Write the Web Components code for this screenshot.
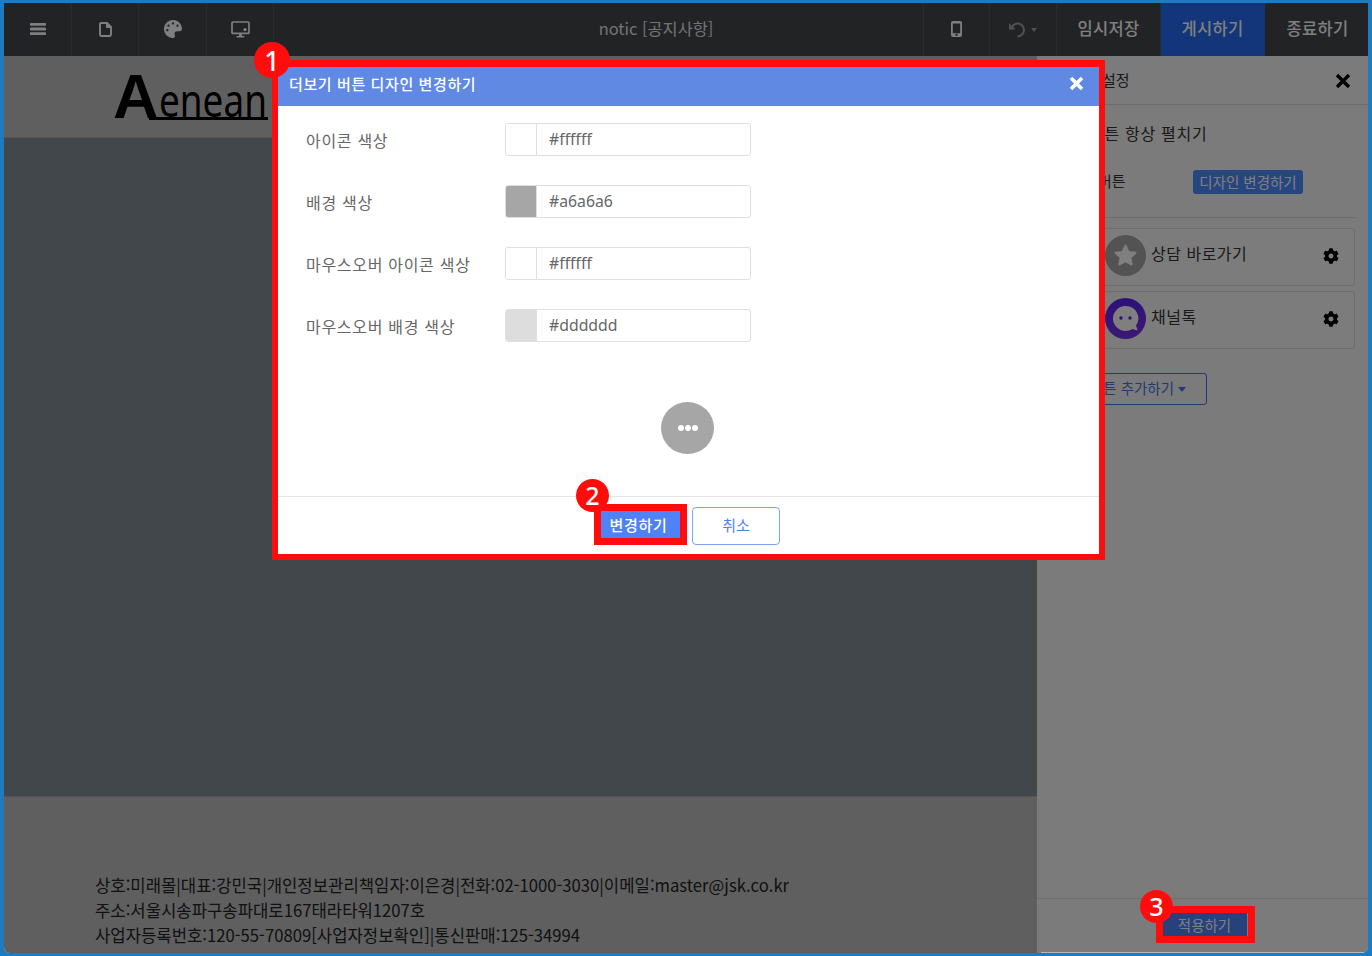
<!DOCTYPE html>
<html lang="ko">
<head>
<meta charset="utf-8">
<title>notic</title>
<style>
html,body{margin:0;height:100%;}
body{
    width:1372px;height:956px;overflow:hidden;background:#1f7bc0;
    font-family:"Noto Sans CJK KR","Noto Sans",sans-serif;
}
</style>
</head>
<body>
<app-frame>
    <top-bar slot="top" page-title="notic [공지사항]"></top-bar>
    <page-canvas slot="canvas"></page-canvas>
    <side-panel slot="panel"></side-panel>
    <design-modal slot="modal"></design-modal>
    <red-ring slot="notes" style="left:1156px;top:906px;width:85px;height:23px"></red-ring>
    <call-out slot="notes" n="1" style="left:254px;top:42px"></call-out>
    <call-out slot="notes" n="3" style="left:1140px;top:890px;width:33px;height:33px;font-size:25px"></call-out>
</app-frame>

<script>
function sheet(css, html){
    return `<style>${css}</style>${html}`;
}

const COG = `<svg viewBox="0 0 512 512" width="16" height="16"><path fill="#000" d="M487.4 315.7l-42.6-24.6c4.3-23.2 4.3-47 0-70.2l42.6-24.6c4.9-2.8 7.1-8.6 5.5-14-11.1-35.6-30-67.8-54.7-94.6-3.8-4.1-10-5.1-14.8-2.3L380.8 110c-17.9-15.4-38.5-27.3-60.8-35.1V25.8c0-5.6-3.9-10.5-9.4-11.7-36.7-8.2-74.3-7.8-109.2 0-5.5 1.2-9.4 6.1-9.4 11.7V75c-22.2 7.9-42.8 19.8-60.8 35.1L88.7 85.5c-4.9-2.8-11-1.9-14.8 2.3-24.7 26.7-43.6 58.9-54.7 94.6-1.7 5.4.6 11.2 5.5 14L67.3 221c-4.3 23.2-4.3 47 0 70.2l-42.6 24.6c-4.9 2.8-7.1 8.6-5.5 14 11.1 35.6 30 67.8 54.7 94.6 3.8 4.1 10 5.1 14.8 2.3l42.6-24.6c17.9 15.4 38.5 27.3 60.8 35.1v49.2c0 5.6 3.9 10.5 9.4 11.7 36.7 8.2 74.3 7.8 109.2 0 5.5-1.2 9.4-6.1 9.4-11.7v-49.2c22.2-7.9 42.8-19.8 60.8-35.1l42.6 24.6c4.9 2.8 11 1.9 14.8-2.3 24.7-26.7 43.6-58.9 54.7-94.6 1.5-5.5-.7-11.3-5.6-14.1zM256 336c-44.1 0-80-35.9-80-80s35.9-80 80-80 80 35.9 80 80-35.9 80-80 80z"/></svg>`;

class AppFrame extends HTMLElement{
    constructor(){
        super();
        this.attachShadow({mode:'open'});
        this.shadowRoot.innerHTML = sheet(`
            :host{display:block;position:relative;width:1372px;height:956px;box-sizing:border-box;padding:3px 4px 3px 4px;}
            .app{display:grid;grid-template-rows:53px 1fr;height:100%;border-radius:0 0 6px 6px;overflow:hidden;}
            .work{display:grid;grid-template-columns:1033px 1fr;min-height:0;}
            .dim{position:absolute;left:4px;top:3px;right:4px;bottom:3px;background:rgba(0,0,0,.5);border-radius:0 0 6px 6px;}
            .edge{position:absolute;left:1041px;right:8px;bottom:3px;height:1px;background:#b5b5b5;}
            .modal{position:absolute;left:272px;top:60px;}
        `,`
            <div class="app">
                <slot name="top"></slot>
                <div class="work">
                    <slot name="canvas"></slot>
                    <slot name="panel"></slot>
                </div>
            </div>
            <div class="dim"></div>
            <div class="edge"></div>
            <div class="modal"><slot name="modal"></slot></div>
            <slot name="notes"></slot>
        `);
    }
}
customElements.define('app-frame', AppFrame);

class TopBar extends HTMLElement{
    constructor(){
        super();
        this.attachShadow({mode:'open'});
        this.shadowRoot.innerHTML = sheet(`
            :host{display:flex;background:#43464b;color:#fff;height:53px;}
            .cell{display:flex;align-items:center;justify-content:center;width:67px;border-right:1px solid #55585d;flex:none;padding-bottom:1px;box-sizing:content-box;height:52px;}
            .cell.n{width:66px;}
            .cell.p{width:65px;}
            .cell svg{display:block;}
            .title{flex:1;text-align:center;font-size:16.4px;line-height:50px;color:#e6e6e6;padding-left:115px;}
            .txt{display:flex;align-items:center;justify-content:center;flex:none;font-size:16.5px;letter-spacing:.3px;color:#fff;width:104px;border-right:1px solid #55585d;box-sizing:border-box;font-weight:500;padding-bottom:4px;}
            .txt.pri{background:#266af4;border-color:#266af4;}
            .txt.last{border:0;width:103px;padding-left:2px;}
            .left{border-left:1px solid #55585d;}
            .undo{gap:4px;}
            .undo>*{opacity:.5;}
            .caret{width:0;height:0;border:3.5px solid transparent;border-top:4px solid #fff;margin-top:4px;}
        `,`
            <div class="cell"><svg width="16" height="14" viewBox="0 0 16 14"><path fill="#fff" d="M1 1h14a1 1 0 0 1 0 2.8H1A1 1 0 0 1 1 1zM1 5.6h14a1 1 0 0 1 0 2.8H1a1 1 0 0 1 0-2.8zM1 10.2h14a1 1 0 0 1 0 2.8H1a1 1 0 0 1 0-2.8z"/></svg></div>
            <div class="cell n"><svg width="13" height="15" viewBox="0 0 13 15"><path fill="none" stroke="#fff" stroke-width="1.9" d="M2 1h6l4 4v7.6a1.4 1.4 0 0 1-1.4 1.4H2.4A1.4 1.4 0 0 1 1 12.6V2a1 1 0 0 1 1-1zM8 1v4h4"/></svg></div>
            <div class="cell"><svg width="18" height="18" viewBox="0 0 512 512"><path fill="#fff" d="M204.3 5C104.9 24.4 24.8 104.3 5.2 203.4c-37 187 131.7 326.4 258.8 306.7 41.2-6.4 61.4-54.6 42.5-91.7-23.1-45.4 9.9-98.4 60.9-98.4h79.7c35.8 0 64.8-29.6 64.9-65.3C511.5 97.1 368.1-26.9 204.3 5zM96 320c-17.7 0-32-14.3-32-32s14.3-32 32-32 32 14.3 32 32-14.3 32-32 32zm32-128c-17.7 0-32-14.3-32-32s14.3-32 32-32 32 14.3 32 32-14.3 32-32 32zm128-64c-17.7 0-32-14.3-32-32s14.3-32 32-32 32 14.3 32 32-14.3 32-32 32zm128 64c-17.7 0-32-14.3-32-32s14.3-32 32-32 32 14.3 32 32-14.3 32-32 32z"/></svg></div>
            <div class="cell n"><svg width="19" height="17" viewBox="0 0 19 17"><path fill="none" stroke="#fff" stroke-width="1.7" d="M2 1h15a1 1 0 0 1 1 1v9.4a1 1 0 0 1-1 1H2a1 1 0 0 1-1-1V2a1 1 0 0 1 1-1z"/><path fill="#fff" d="M8 12.4h3V15h2.4v1.4H5.6V15H8z"/><circle cx="14" cy="8.6" r="1.6" fill="#fff"/></svg></div>
            <div class="title">${this.getAttribute('page-title')}</div>
            <div class="cell p left"><svg width="11" height="16" viewBox="0 0 11 16"><path fill-rule="evenodd" fill="#fff" d="M2 0h7a2 2 0 0 1 2 2v12a2 2 0 0 1-2 2H2a2 2 0 0 1-2-2V2a2 2 0 0 1 2-2zM1.8 2.4v9.8h7.4V2.4zM5.5 12.8a1.1 1.1 0 1 0 0 2.2 1.1 1.1 0 0 0 0-2.2z"/></svg></div>
            <div class="cell n undo"><svg width="18" height="17" viewBox="0 0 18 17"><path fill="none" stroke="#fff" stroke-width="2" d="M2.2 8.4A6.4 6.4 0 1 1 8.4 15.4"/><path fill="#fff" d="M0 2v6.6h6.6z"/></svg><i class="caret"></i></div>
            <div class="txt">임시저장</div>
            <div class="txt pri">게시하기</div>
            <div class="txt last">종료하기</div>
        `);
    }
}
customElements.define('top-bar', TopBar);

class PageCanvas extends HTMLElement{
    constructor(){
        super();
        this.attachShadow({mode:'open'});
        this.shadowRoot.innerHTML = sheet(`
            :host{display:grid;grid-template-rows:82px 1fr 157px;background:#bfbfbf;min-height:0;}
            .head{padding-left:109px;border-bottom:1px solid #aaa;background:#bfbfbf;display:flex;align-items:flex-start;height:82px;box-sizing:border-box;color:#000;}
            .head b{display:block;font:700 63px/63px "Liberation Sans",sans-serif;margin-top:9px;}
            .word{display:block;margin:19px 0 0 -10px;padding-left:10px;width:109px;height:42px;border-bottom:3px solid #000;font:400 45px/50px "Noto Sans",sans-serif;}
            .word span{display:inline-block;transform:scaleX(.82);transform-origin:0 0;}
            .hero{background:#848e96;}
            .foot{background:#bfbfbf;border-top:1px solid #aaa;padding:75px 0 0 91px;font-size:17.2px;line-height:25px;color:#222;}
            .foot div{white-space:nowrap;transform:scaleX(.97);transform-origin:0 0;}
        `,`
            <div class="head"><b>A</b><div class="word"><span>enean</span></div></div>
            <div class="hero"></div>
            <div class="foot">
                <div>상호:미래몰|대표:강민국|개인정보관리책임자:이은경|전화:02-1000-3030|이메일:master@jsk.co.kr</div>
                <div>주소:서울시송파구송파대로167태라타워1207호</div>
                <div>사업자등록번호:120-55-70809[사업자정보확인]|통신판매:125-34994</div>
            </div>
        `);
    }
}
customElements.define('page-canvas', PageCanvas);

class SidePanel extends HTMLElement{
    constructor(){
        super();
        this.attachShadow({mode:'open'});
        this.shadowRoot.innerHTML = sheet(`
            :host{display:flex;flex-direction:column;background:#f6f6f6;color:#333;font-size:15px;min-height:0;}
            .title{height:49px;box-sizing:border-box;border-bottom:1px solid #ddd;display:flex;align-items:center;justify-content:space-between;padding:0 17px 2px 65px;}
            .title svg{margin-top:3px;}
            .body{flex:1;padding:0 13px 0 54px;}
            .always{margin:16px 0 0 -2px;line-height:24px;font-size:16px;letter-spacing:.7px;}
            .btnrow{display:flex;justify-content:space-between;align-items:center;height:24px;margin-top:25px;padding-right:52px;font-size:15px;}
            .btnrow span:first-child{margin:-3px 0 0 7px;}
            .design{background:#4f8aff;border-radius:3px;color:#fff;font-size:14.5px;line-height:24px;width:110px;text-align:center;}
            hr{border:0;border-top:1px solid #ddd;margin:23px 0 10px;}
            quick-item{margin-bottom:5px;}
            .add{margin-top:24px;width:116px;height:32px;box-sizing:border-box;border:1px solid #3f77e6;border-radius:3px;color:#3f77e6;font-size:14.5px;display:flex;align-items:center;justify-content:flex-end;padding:0 20px 3px 0;gap:4px;white-space:nowrap;}
            .add i{width:0;height:0;border:4px solid transparent;border-top:5px solid #3f77e6;margin-top:8px;}
            .foot{height:55px;border-top:1px solid #ddd;box-sizing:border-box;}
            .apply{margin:14px 0 0 125px;width:85px;height:23px;background:#4f82f7;color:#fff;font-size:14.5px;line-height:23px;text-align:center;}
        `,`
            <div class="title"><span>설정</span><svg width="16" height="16" viewBox="0 0 16 16"><path stroke="#000" stroke-width="3.4" d="M2 2l12 12M14 2L2 14"/></svg></div>
            <div class="body">
                <div class="always">버튼 항상 펼치기</div>
                <div class="btnrow"><span>버튼</span><span class="design">디자인 변경하기</span></div>
                <hr>
                <quick-item label="상담 바로가기" kind="star"></quick-item>
                <quick-item label="채널톡" kind="talk"></quick-item>
                <div class="add">버튼 추가하기<i></i></div>
            </div>
            <div class="foot"><div class="apply">적용하기</div></div>
        `);
    }
}
customElements.define('side-panel', SidePanel);

class QuickItem extends HTMLElement{
    constructor(){
        super();
        this.attachShadow({mode:'open'});
        const talk = this.getAttribute('kind') === 'talk';
        const icon = talk
            ? `<svg width="41" height="41" viewBox="0 0 41 41"><defs><linearGradient id="g" x1="0" y1="0" x2="0" y2="1"><stop offset="0" stop-color="#5a22f0"/><stop offset="1" stop-color="#7a30e8"/></linearGradient></defs><circle cx="20.5" cy="20.5" r="20.5" fill="url(#g)"/><path fill="#fff" d="M20.5 8a12.5 12.5 0 1 0 0 25c2.5 0 5-.7 7-2l5 1.6-1.4-5A12.5 12.5 0 0 0 20.5 8z"/><circle cx="16" cy="20" r="1.7" fill="#5a22f0"/><circle cx="25" cy="20" r="1.7" fill="#5a22f0"/></svg>`
            : `<svg width="41" height="41" viewBox="0 0 41 41"><circle cx="20.5" cy="20.5" r="20.5" fill="#a6a6a6"/><path fill="#fff" stroke="#fff" stroke-width="2" stroke-linejoin="round" d="M20.5 10.5l3 6.4 7 .9-5.1 4.8 1.3 6.9-6.2-3.4-6.2 3.4 1.3-6.900-5.100-4.800 7-.900z"/></svg>`;
        this.shadowRoot.innerHTML = sheet(`
            :host{display:flex;align-items:center;height:58px;box-sizing:border-box;border:1px solid #ddd;border-radius:3px;background:#f8f8f8;padding:0 15px 0 13px;}
            svg{display:block;flex:none;margin-top:-3px;}
            svg:first-child{margin-top:${talk ? -1 : -3}px;}
            .label{flex:1;margin-left:5px;margin-top:-8px;font-size:16px;letter-spacing:.5px;}
        `,`${icon}<span class="label">${this.getAttribute('label')}</span>${COG}`);
    }
}
customElements.define('quick-item', QuickItem);

class ColorField extends HTMLElement{
    constructor(){
        super();
        this.attachShadow({mode:'open'});
        const value = this.getAttribute('value');
        this.shadowRoot.innerHTML = sheet(`
            :host{display:flex;align-items:center;height:33px;color:#666;font-size:16px;}
            .label{width:199px;flex:none;letter-spacing:.7px;}
            .box{width:246px;height:33px;box-sizing:border-box;display:flex;border:1px solid #dcdfe6;border-radius:3px;overflow:hidden;}
            .swatch{width:30px;flex:none;border-right:1px solid #dcdfe6;background:${value};}
            .val{padding-left:12px;font-size:15.8px;line-height:31px;color:#666;font-family:"Noto Sans",sans-serif;}
        `,`<span class="label">${this.getAttribute('label')}</span><div class="box"><span class="swatch"></span><span class="val">${value}</span></div>`);
    }
}
customElements.define('color-field', ColorField);

class DesignModal extends HTMLElement{
    constructor(){
        super();
        this.attachShadow({mode:'open'});
        this.shadowRoot.innerHTML = sheet(`
            :host{display:block;width:833px;height:500px;box-sizing:border-box;border:6px solid #ff0d0d;border-top-width:7px;background:#fff;}
            .head{height:39px;box-sizing:border-box;background:#6089e4;color:#fff;display:flex;align-items:center;justify-content:space-between;padding:0 15px 7px 11px;font-size:15px;font-weight:500;letter-spacing:.6px;}
            .fields{padding:17px 0 0 28px;display:flex;flex-direction:column;gap:29px;height:391px;box-sizing:border-box;position:relative;border-bottom:1px solid #e6e6e6;}
            .dots{position:absolute;left:383px;top:296px;width:53px;height:52px;border-radius:50%;background:#a6a6a6;display:flex;align-items:center;justify-content:center;gap:1px;}
            .dots i{width:6px;height:6px;border-radius:50%;background:#fff;}
            .foot{position:relative;display:flex;justify-content:center;gap:12px;padding:10px 0 0 4px;height:56px;box-sizing:border-box;}
            .ok{width:75px;padding-right:4px;height:27px;margin-top:4px;background:#4f82f7;color:#fff;font-size:15px;font-weight:500;letter-spacing:.7px;line-height:27px;text-align:center;outline:7px solid #ff0d0d;}
            .no{width:88px;height:38px;box-sizing:border-box;border:1px solid #7ea3f2;border-radius:4px;color:#4f82f7;font-size:15px;line-height:34px;text-align:center;}
            call-out{left:298px;top:-18px;width:33px;height:33px;font-size:25px;}
        `,`
            <div class="head"><span>더보기 버튼 디자인 변경하기</span><svg width="15" height="15" viewBox="0 0 15 15"><path stroke="#fff" stroke-width="3.6" d="M2 2l11 11M13 2L2 13"/></svg></div>
            <div class="fields">
                <color-field label="아이콘 색상" value="#ffffff"></color-field>
                <color-field label="배경 색상" value="#a6a6a6"></color-field>
                <color-field label="마우스오버 아이콘 색상" value="#ffffff"></color-field>
                <color-field label="마우스오버 배경 색상" value="#dddddd"></color-field>
                <div class="dots"><i></i><i></i><i></i></div>
            </div>
            <div class="foot">
                <div class="ok">변경하기</div>
                <div class="no">취소</div>
                <call-out n="2"></call-out>
            </div>
        `);
    }
}
customElements.define('design-modal', DesignModal);

class CallOut extends HTMLElement{
    constructor(){
        super();
        this.attachShadow({mode:'open'});
        this.shadowRoot.innerHTML = sheet(`
            :host{position:absolute;display:flex;width:36px;height:36px;border-radius:50%;background:#ff0d0d;color:#fff;align-items:center;justify-content:center;font-family:"Noto Sans",sans-serif;font-weight:500;font-size:27px;line-height:1;}
        `,`${this.getAttribute('n')}`);
    }
}
customElements.define('call-out', CallOut);

class RedRing extends HTMLElement{
    constructor(){
        super();
        this.attachShadow({mode:'open'});
        this.shadowRoot.innerHTML = sheet(`
            :host{position:absolute;display:block;border:7px solid #ff0d0d;}
        `,``);
    }
}
customElements.define('red-ring', RedRing);
</script>
</body>
</html>
